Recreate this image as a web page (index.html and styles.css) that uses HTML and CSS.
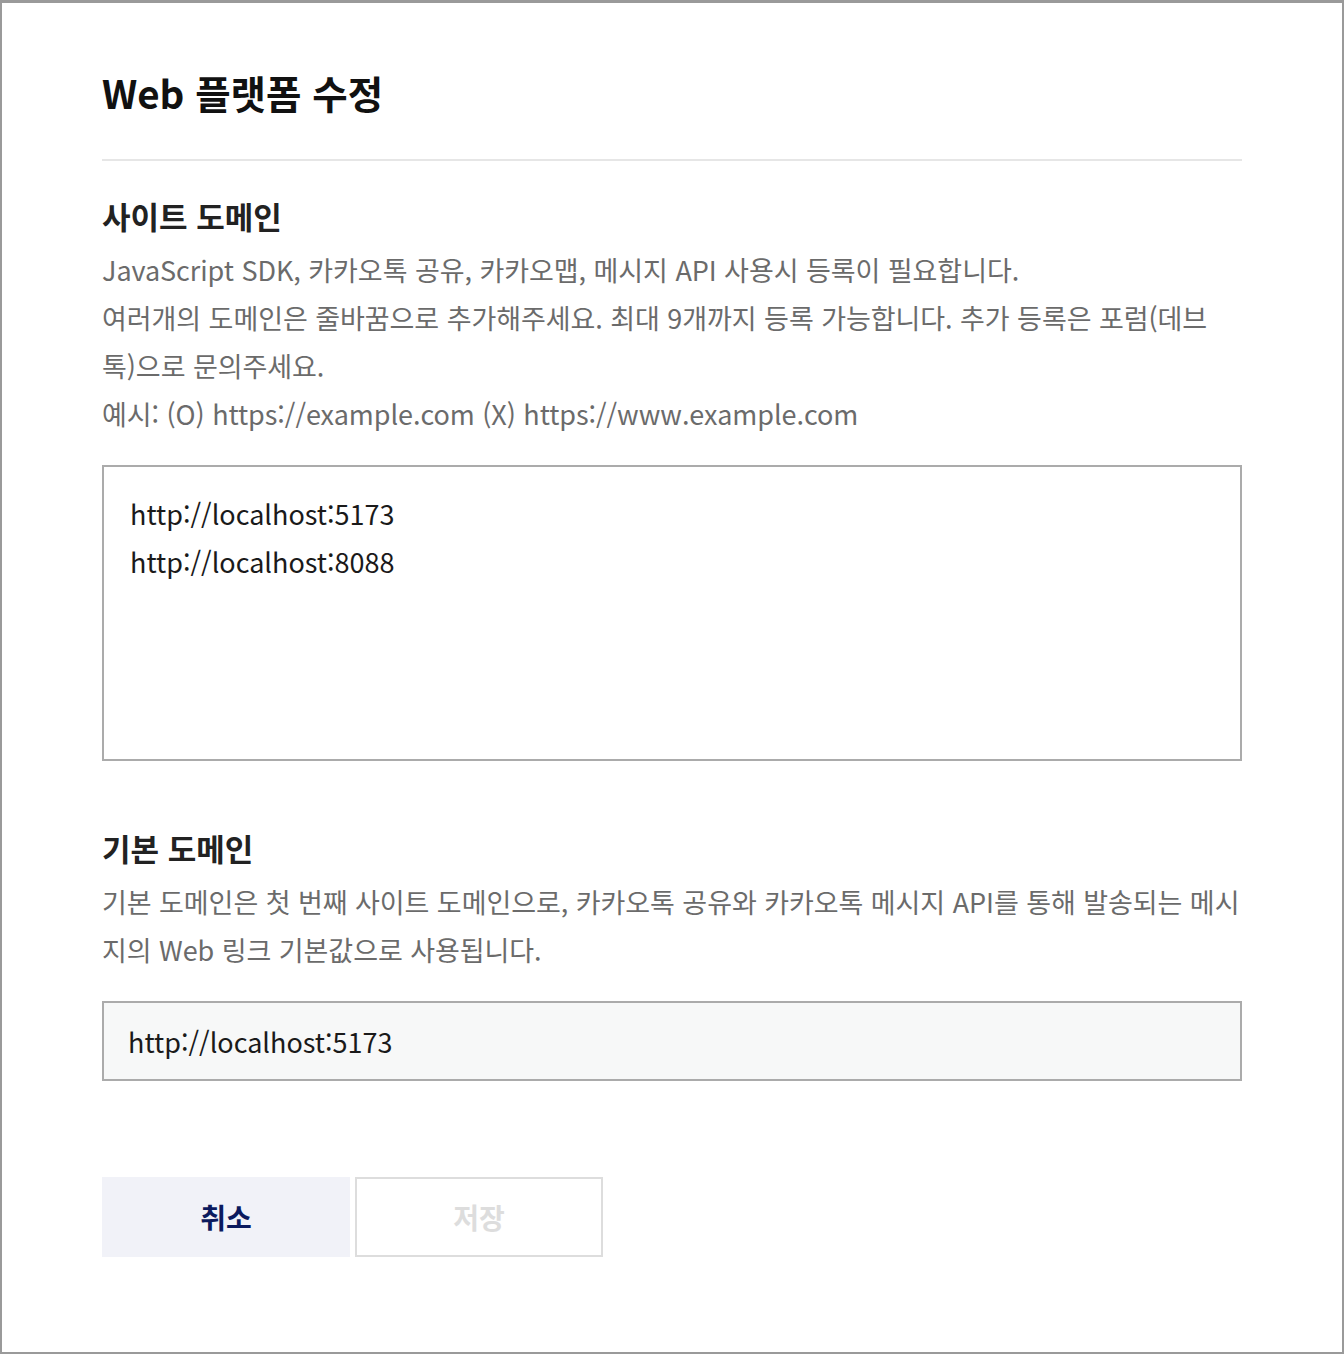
FILE: index.html
```html
<!DOCTYPE html>
<html lang="ko">
<head>
<meta charset="utf-8">
<title>Web 플랫폼 수정</title>
<link rel="stylesheet" href="styles.css">
</head>
<body>
<div class="frame">
  <div class="modal">
    <h1 class="title">Web 플랫폼 수정</h1>
    <hr class="divider">
    <section class="section">
      <h2 class="section-title">사이트 도메인</h2>
      <p class="desc desc-narrow">JavaScript SDK, 카카오톡 공유, 카카오맵, 메시지 API 사용시 등록이 필요합니다.<br>여러개의 도메인은 줄바꿈으로 추가해주세요. 최대 9개까지 등록 가능합니다. 추가 등록은 포럼(데브톡)으로 문의주세요.<br>예시: (O) https://example.com (X) https://www.example.com</p>
      <div class="textarea">http://localhost:5173<br>http://localhost:8088</div>
    </section>
    <section class="section section-second">
      <h2 class="section-title">기본 도메인</h2>
      <p class="desc">기본 도메인은 첫 번째 사이트 도메인으로, 카카오톡 공유와 카카오톡 메시지 API를 통해 발송되는 메시지의 Web 링크 기본값으로 사용됩니다.</p>
      <div class="input">http://localhost:5173</div>
    </section>
    <div class="buttons">
      <button class="btn btn-cancel">취소</button>
      <button class="btn btn-save">저장</button>
    </div>
  </div>
</div>
</body>
</html>
```
FILE: styles.css
```css
html, body {
  margin: 0;
  padding: 0;
  background: #fff;
}
body {
  font-family: "Noto Sans CJK KR", "Noto Sans", sans-serif;
  color: #111;
}
.frame {
  box-sizing: border-box;
  height: 1354px;
  border-style: solid;
  border-color: #9a9a9a;
  border-width: 3px 2px 2px 2px;
  padding: 65px 100px 0 100px;
}
.modal {
  width: 1140px;
}
.title {
  margin: 0;
  font-size: 38.5px;
  line-height: 48px;
  font-weight: 700;
  color: #111;
}
.divider {
  margin: 43px 0 0 0;
  border: 0;
  height: 2px;
  background: #e6e6e6;
}
.section {
  margin-top: 35px;
}
.section-second {
  margin-top: 67px;
}
.section-title {
  margin: 0;
  font-size: 31px;
  line-height: 40px;
  font-weight: 700;
  color: #222;
}
.desc {
  margin: 10px 0 0 0;
  font-size: 27px;
  line-height: 48px;
  letter-spacing: -0.06px;
  color: #6b6b6b;
}
.desc-narrow {
  padding-right: 3px;
}
.textarea {
  box-sizing: border-box;
  margin-top: 27px;
  height: 296px;
  border: 2px solid #ababab;
  padding: 23px 26px;
  font-size: 27px;
  line-height: 48px;
  color: #1a1a1a;
}
.input {
  box-sizing: border-box;
  margin-top: 27px;
  height: 80px;
  border: 2px solid #ababab;
  background: #f7f8f8;
  padding: 0 24px;
  display: flex;
  align-items: center;
  font-size: 27px;
  color: #1a1a1a;
}
.buttons {
  margin-top: 96px;
  display: flex;
  gap: 5px;
}
.btn {
  box-sizing: border-box;
  width: 248px;
  height: 80px;
  font-family: inherit;
  font-size: 28px;
  font-weight: 700;
  padding: 0;
  cursor: pointer;
}
.btn-cancel {
  border: 0;
  background: #f1f2f8;
  color: #0b1a5e;
}
.btn-save {
  border: 2px solid #dddddd;
  background: #fff;
  color: #dddddd;
}
```
